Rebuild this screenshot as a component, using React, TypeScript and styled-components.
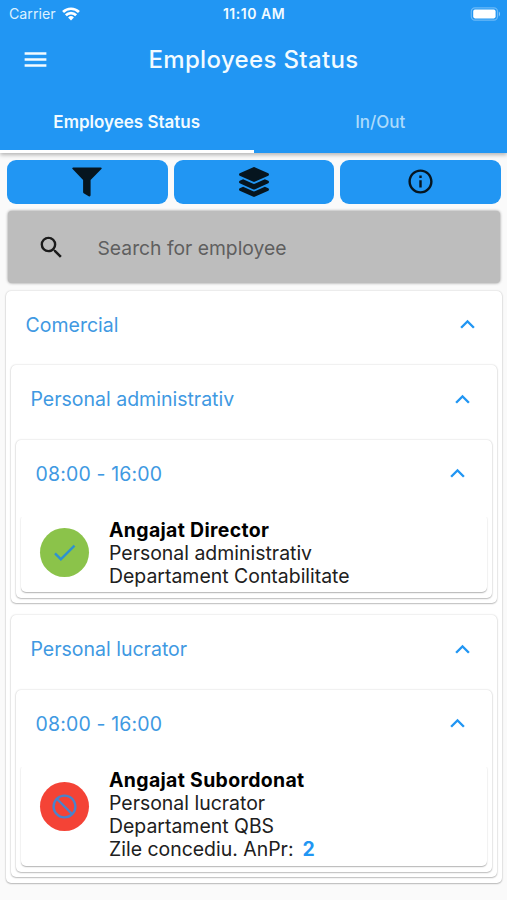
import React from "react";
import styled, { createGlobalStyle } from "styled-components";
import { MdMenu, MdSearch, MdExpandLess, MdCheck, MdBlock, MdInfoOutline } from "react-icons/md";
import { FaLayerGroup } from "react-icons/fa";

const Global = createGlobalStyle`
  * { box-sizing: border-box; }
  body { margin: 0; background: #fafafa; font-family: Inter, "Liberation Sans", sans-serif; }
`;

const Screen = styled.div`
  width: 507px;
  height: 900px;
  overflow: hidden;
  background: #fafafa;
`;

const Header = styled.header`
  height: 153px;
  background: #2196f3;
  color: #f2fbff;
  box-shadow: 0 2px 4px rgba(0, 0, 0, 0.28);
`;

const StatusBar = styled.div`
  height: 27px;
  padding: 0 8px 0 9px;
  display: grid;
  grid-template-columns: 1fr auto 1fr;
  align-items: center;
  font-size: 14px;
  line-height: 27px;
`;

const Carrier = styled.div`
  display: flex;
  align-items: center;
  gap: 6px;
  font-size: 14.2px;
  color: #dcf1ff;
`;

const Clock = styled.div`
  font-weight: 600;
  font-size: 14px;
  letter-spacing: 0.5px;
`;

const BatteryBox = styled.div`
  display: flex;
  justify-content: flex-end;
  margin-right: -2px;
`;

const TitleBar = styled.div`
  height: 65px;
  padding: 0 21px;
  display: grid;
  grid-template-columns: 60px 1fr 60px;
  align-items: center;
  svg { display: block; }
`;

const Title = styled.h1`
  margin: 0;
  text-align: center;
  font-size: 24px;
  font-weight: 500;
  letter-spacing: 0.35px;
`;

const Tabs = styled.nav`
  display: grid;
  grid-template-columns: 1fr 1fr;
  height: 61px;
`;

const Tab = styled.div<{ $active?: boolean }>`
  display: flex;
  align-items: center;
  justify-content: center;
  padding-top: 2px;
  font-size: 17px;
  font-weight: ${(p) => (p.$active ? 600 : 500)};
  color: ${(p) => (p.$active ? "#f2fbff" : "#addbfb")};
  border-bottom: 3px solid ${(p) => (p.$active ? "#fff" : "transparent")};
`;

const Actions = styled.div`
  display: grid;
  grid-template-columns: repeat(3, 1fr);
  gap: 6px;
  padding: 7px 6px 0 7px;
`;

const ActionButton = styled.button`
  height: 43.5px;
  padding: 0;
  border: 0;
  border-radius: 9px;
  background: #2196f3;
  color: #06151f;
  display: flex;
  align-items: center;
  justify-content: center;
`;

const SearchBox = styled.div`
  margin: 7.5px 7px 0 8px;
  height: 72px;
  border-radius: 4px;
  background: #bdbdbd;
  box-shadow: 0 0 3px rgba(0, 0, 0, 0.45);
  display: flex;
  align-items: center;
  padding: 1px 0 0 29px;
  gap: 31.5px;
  color: #1b1b1b;
`;

const Placeholder = styled.span`
  font-size: 19.3px;
  color: #5f5f5f;
`;

const Card = styled.section`
  background: #fff;
  border-radius: 5px;
  padding: 0 5px 5.5px;
  box-shadow: 0 1px 1.5px rgba(0, 0, 0, 0.22), 0 0 2px rgba(0, 0, 0, 0.2);
`;

const Root = styled.main`
  margin: 7.5px 5px 0 6px;
`;

const Stack = styled.div`
  display: grid;
  gap: 12px;
`;

const GroupHeader = styled.div`
  height: 74.5px;
  padding: 0 15px 6px 14.5px;
  display: flex;
  align-items: center;
  justify-content: space-between;
  color: #2196f3;
  font-size: 19.5px;
`;

const GroupLabel = styled.span<{ $numeric?: boolean }>`
  color: #4099e2;
  letter-spacing: ${(p) => (p.$numeric ? 0.15 : 0)}px;
`;

const PersonCard = styled.article<{ $height: number }>`
  height: ${(p) => p.$height}px;
  padding: 4px 19px;
  background: #fff;
  border-radius: 5px;
  box-shadow: 0 1px 1px rgba(0, 0, 0, 0.2), 0 1px 2px rgba(0, 0, 0, 0.12);
  clip-path: inset(3px -4px -4px -4px);
  display: flex;
  align-items: flex-start;
  gap: 20px;
`;

const Avatar = styled.div<{ $color: string; $top: number }>`
  margin-top: ${(p) => p.$top}px;
  width: 49px;
  height: 49px;
  border-radius: 50%;
  background: ${(p) => p.$color};
  display: grid;
  place-items: center;
`;

const BlockedIcon = styled(MdBlock)`
  transform: scaleX(-1);
`;

const Details = styled.div`
  padding-top: 0.5px;
  font-size: 19.45px;
  line-height: 23.3px;
  color: #202020;
  white-space: nowrap;
`;

const Name = styled.div`
  font-weight: 700;
  letter-spacing: 0.33px;
  color: #000;
`;

const Count = styled.b`
  margin-left: 9px;
  color: #2196f3;
`;

function Wifi() {
  return (
    <svg width="18" height="14" viewBox="0 0 19 15" fill="none" stroke="#fff" strokeWidth="2.9">
      <path d="M1 5.4a12 12 0 0 1 17 0M4 8.9a7.8 7.8 0 0 1 11 0" />
      <path d="M9.5 14.4 6.4 11.3a4.4 4.4 0 0 1 6.2 0z" fill="#fff" stroke="none" />
    </svg>
  );
}

function Battery() {
  return (
    <svg width="31" height="14" viewBox="0 0 31 14">
      <rect x="1.3" y="0.8" width="26.2" height="12.4" rx="3.6" fill="none" stroke="#6ab9f7" strokeWidth="1.2" />
      <rect x="3.2" y="2.6" width="22.4" height="8.8" rx="1.8" fill="#fff" />
      <path d="M28.9 4.6c1.5.7 1.5 4.1 0 4.8z" fill="#8ccafa" />
    </svg>
  );
}

function Funnel() {
  return (
    <svg width="30" height="30" viewBox="0 0 30 30" fill="currentColor">
      <path d="M1.3.4h27.4c1 0 1.3 1 .7 1.7L18.6 13v15.1c0 1.2-1 1.7-1.9 1.1l-4.6-2.6c-.7-.4-1-.9-1-1.7V13L.6 2.1C0 1.4.3.4 1.3.4z" />
    </svg>
  );
}

interface Person {
  name: string;
  role: string;
  department: string;
  leaveDays?: number;
  absent?: boolean;
}

interface Group {
  label: string;
  hours: string;
  person: Person;
}

const groups: Group[] = [
  {
    label: "Personal administrativ",
    hours: "08:00 - 16:00",
    person: { name: "Angajat Director", role: "Personal administrativ", department: "Departament Contabilitate" },
  },
  {
    label: "Personal lucrator",
    hours: "08:00 - 16:00",
    person: {
      name: "Angajat Subordonat",
      role: "Personal lucrator",
      department: "Departament QBS",
      leaveDays: 2,
      absent: true,
    },
  },
];

function Heading({ label, numeric }: { label: string; numeric?: boolean }) {
  return (
    <GroupHeader>
      <GroupLabel $numeric={numeric}>{label}</GroupLabel>
      <MdExpandLess size={29} />
    </GroupHeader>
  );
}

function PersonRow({ person }: { person: Person }) {
  return (
    <PersonCard $height={person.absent ? 102 : 78}>
      <Avatar $color={person.absent ? "#f44336" : "#8bc34a"} $top={person.absent ? 14 : 10}>
        {person.absent ? <BlockedIcon size={29} color="#4a83cb" /> : <MdCheck size={29} color="#2e92cf" />}
      </Avatar>
      <Details>
        <Name>{person.name}</Name>
        <div>{person.role}</div>
        <div>{person.department}</div>
        {person.leaveDays !== undefined && (
          <div>
            Zile concediu. AnPr:<Count>{person.leaveDays}</Count>
          </div>
        )}
      </Details>
    </PersonCard>
  );
}

export default function App() {
  return (
    <Screen>
      <Global />
      <Header>
        <StatusBar>
          <Carrier>
            Carrier
            <Wifi />
          </Carrier>
          <Clock>11:10 AM</Clock>
          <BatteryBox>
            <Battery />
          </BatteryBox>
        </StatusBar>
        <TitleBar>
          <MdMenu size={29} />
          <Title>Employees Status</Title>
        </TitleBar>
        <Tabs>
          <Tab $active>Employees Status</Tab>
          <Tab>In/Out</Tab>
        </Tabs>
      </Header>
      <Actions>
        <ActionButton aria-label="Filter">
          <Funnel />
        </ActionButton>
        <ActionButton aria-label="Group">
          <FaLayerGroup size={30} />
        </ActionButton>
        <ActionButton aria-label="Information">
          <MdInfoOutline size={29} />
        </ActionButton>
      </Actions>
      <SearchBox>
        <MdSearch size={29} />
        <Placeholder>Search for employee</Placeholder>
      </SearchBox>
      <Root>
        <Card>
          <Heading label="Comercial" />
          <Stack>
            {groups.map((group) => (
              <Card key={group.label}>
                <Heading label={group.label} />
                <Card>
                  <Heading label={group.hours} numeric />
                  <PersonRow person={group.person} />
                </Card>
              </Card>
            ))}
          </Stack>
        </Card>
      </Root>
    </Screen>
  );
}
